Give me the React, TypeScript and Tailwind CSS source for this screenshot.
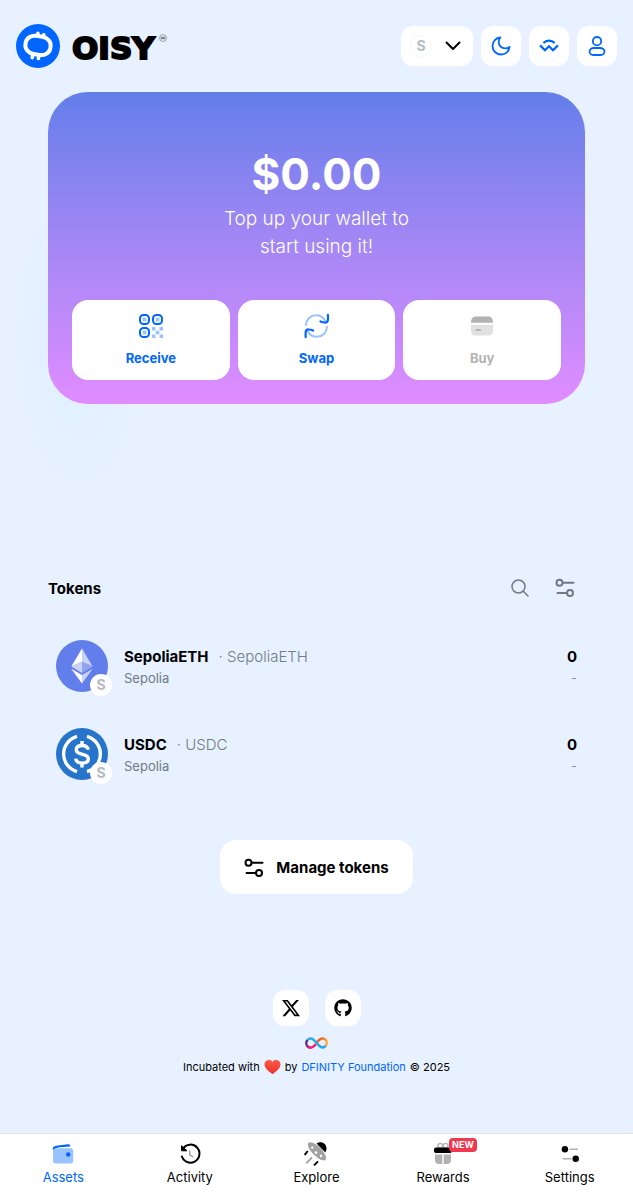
import type { ReactNode } from "react";
import { FaGithub, FaXTwitter } from "react-icons/fa6";

function OisyMark() {
  return (
    <svg width="44" height="44" viewBox="0 0 44 44" aria-hidden="true">
      <circle cx="22" cy="22" r="22" fill="#0066ff" />
      <g fill="none" stroke="#fff" strokeLinecap="round">
        <rect x="9.400" y="12.200" width="25.200" height="18.400" rx="9.500" ry="8.500" transform="rotate(9 22 21.400)" strokeWidth="4" />
        <path d="M21.500 12l.4-2.600M27.300 13l.5-2.200M16.700 31.500l-.5 2.100M22.700 32.500l-.3 2" strokeWidth="3.600" />
      </g>
    </svg>
  );
}

function RegisteredInfinity() {
  return (
    <svg width="8" height="8" viewBox="0 0 8 8" fill="none" stroke="#333" aria-hidden="true">
      <circle cx="4" cy="4" r="3.500" strokeWidth=".4" />
      <circle cx="2.900" cy="4" r="1" strokeWidth=".6" />
      <circle cx="5.100" cy="4" r="1" strokeWidth=".6" />
    </svg>
  );
}

function ChevronIcon() {
  return (
    <svg width="16" height="10" viewBox="0 0 16 10" fill="none" aria-hidden="true">
      <path d="M1.500 1.500L8 8l6.500-6.500" stroke="#000" strokeWidth="2" strokeLinecap="round" strokeLinejoin="round" />
    </svg>
  );
}

function MoonIcon() {
  return (
    <svg width="20" height="20" viewBox="0 0 20 20" fill="none" aria-hidden="true">
      <path
        d="M9.300 1.500C5 1.700 1.500 5.300 1.500 10a8.500 8.500 0 0 0 8.500 8.500c4.700 0 8.200-3.300 8.500-7.600-1.300.9-2.800 1.400-4.300 1.400-3.800 0-6.500-2.700-6.500-6.300 0-1.700.5-3.200 1.600-4.500Z"
        stroke="#0066ff"
        strokeWidth="1.800"
        strokeLinejoin="round"
      />
    </svg>
  );
}

function WalletConnectIcon() {
  return (
    <svg width="20" height="14" viewBox="0 0 20 14" fill="none" stroke="#0066ff" strokeWidth="2.200" aria-hidden="true">
      <path d="M4.400 4.100c3.100-3.300 8.100-3.300 11.200 0" />
      <path d="M1 6.400l5 4.900 4-4 4 4 5-4.900" />
    </svg>
  );
}

function PersonIcon() {
  return (
    <svg width="18" height="20" viewBox="0 0 18 20" fill="none" stroke="#0066ff" strokeWidth="1.800" aria-hidden="true">
      <circle cx="9" cy="5.200" r="4.200" />
      <rect x="1.500" y="12" width="15" height="7" rx="4.500" ry="3.500" />
    </svg>
  );
}

function QrIcon() {
  return (
    <svg width="24" height="24" viewBox="0 0 24 24" fill="none" aria-hidden="true">
      <g stroke="#0066ff" strokeWidth="2">
        <rect x="1" y="1" width="9" height="9" rx="3.500" />
        <rect x="14" y="1" width="9" height="9" rx="3.500" />
        <rect x="1" y="14" width="9" height="9" rx="3.500" />
      </g>
      <g fill="#99c2ff">
        <rect x="3.600" y="3.600" width="3.800" height="3.800" />
        <rect x="16.600" y="3.600" width="3.800" height="3.800" />
        <rect x="3.600" y="16.600" width="3.800" height="3.800" />
        <path d="M13 13h3.500v3.500H13zM20.500 13H24v3.500h-3.500zM16.700 16.700h3.600v3.600h-3.600zM13 20.500h3.500V24H13zM20.500 20.500H24V24h-3.500z" />
      </g>
    </svg>
  );
}

function SwapIcon() {
  return (
    <svg width="26" height="26" viewBox="0 0 26 26" fill="none" strokeWidth="2" strokeLinecap="round" strokeLinejoin="round" aria-hidden="true">
      <path d="M2 12C2.300 6.300 6.600 2.200 12 2.200c3.900 0 7.300 2 9 5.300M23 14c-.3 5.700-4.600 9.800-10 9.800-3.900 0-7.300-2-9-5.300" stroke="#99c2ff" />
      <path d="M23.900 1.800c.2 2 .2 3.800 0 5.200-.3 1.900-1.300 2.700-3.200 2.500-1.500-.1-2.900-.5-4.200-1M1.700 24.200c-.2-2-.2-3.800 0-5.200.3-1.900 1.300-2.700 3.200-2.500 1.500.1 2.900.5 4.200 1" stroke="#0066ff" strokeWidth="2.200" />
    </svg>
  );
}

function CardIcon() {
  return (
    <svg width="24" height="24" viewBox="0 0 24 24" aria-hidden="true">
      <path d="M1 8.800C1 5 2.400 2.500 6 2.500h12c3.600 0 5 2.500 5 6.300Z" fill="#b2b2b2" />
      <path d="M1 10.800h22V16c0 4-1.600 5.500-5 5.500H6c-3.400 0-5-1.500-5-5.500Z" fill="#e0e0e0" />
      <path d="M6.300 16h4" stroke="#a8a8a8" strokeWidth="1.700" strokeLinecap="round" />
    </svg>
  );
}

function SearchIcon() {
  return (
    <svg width="18" height="18" viewBox="0 0 18 18" fill="none" stroke="#707b85" strokeWidth="1.500" strokeLinecap="round" aria-hidden="true">
      <circle cx="7.500" cy="7.500" r="6.500" />
      <path d="M12.300 12.300L17 17" />
    </svg>
  );
}

function SlidersIcon() {
  return (
    <svg width="20" height="20" viewBox="0 0 20 20" fill="none" stroke="currentColor" strokeWidth="2" strokeLinecap="round" aria-hidden="true">
      <circle cx="4.500" cy="4.800" r="3" />
      <path d="M8 4.800h10.500M2.500 15h9" />
      <circle cx="15" cy="15" r="3" />
    </svg>
  );
}

function EthLogo() {
  return (
    <svg width="52" height="52" viewBox="0 0 52 52" aria-hidden="true">
      <circle cx="26" cy="26" r="26" fill="#627eea" />
      <path d="M26 8.500v13.200l10.700 4.900Z" fill="#c9d3f8" />
      <path d="M26 8.500L15.300 26.600 26 21.700Z" fill="#fff" />
      <path d="M26 21.700v11.200l10.700-6.300Z" fill="#92a5f0" />
      <path d="M15.300 26.600L26 32.900V21.700Z" fill="#c9d3f8" />
      <path d="M26 35v8.500l10.700-14.800Z" fill="#c9d3f8" />
      <path d="M15.300 28.700L26 43.500V35Z" fill="#fff" />
    </svg>
  );
}

function UsdcLogo() {
  return (
    <svg width="52" height="52" viewBox="0 0 52 52" fill="none" aria-hidden="true">
      <circle cx="26" cy="26" r="26" fill="#2775ca" />
      <g stroke="#fff" strokeWidth="3.400">
        <path d="M21 8.300a18.400 18.400 0 0 0 0 35.400M31 8.300a18.400 18.400 0 0 1 0 35.400" />
        <path d="M32.200 21.700c-.5-2.700-2.700-4.200-6-4.200-3.500 0-5.900 1.500-5.900 4.200 0 6.300 12 3 12 9 0 2.800-2.500 4.400-6.100 4.400-3.700 0-6.100-1.500-6.500-4.500" />
        <path d="M26 13v4.500M26 35v4.500" />
      </g>
    </svg>
  );
}

function InfinityLogo() {
  return (
    <svg width="23" height="12" viewBox="0 0 46 24" fill="none" strokeWidth="5" role="img" aria-label="Internet Computer">
      <defs>
        <linearGradient id="inf-left" x1="2" y1="6" x2="20" y2="20" gradientUnits="userSpaceOnUse">
          <stop offset=".2" stopColor="#522785" />
          <stop offset=".7" stopColor="#ed1e79" />
        </linearGradient>
        <linearGradient id="inf-right" x1="24" y1="4" x2="44" y2="18" gradientUnits="userSpaceOnUse">
          <stop offset=".2" stopColor="#f15a24" />
          <stop offset=".8" stopColor="#fbb03b" />
        </linearGradient>
      </defs>
      <path d="M5 6C1.500 10 2.300 16 5.500 19c4 3.500 9 2.500 13-1.200L22 14" stroke="url(#inf-left)" />
      <path d="M24 10.500C28 6 31 3 35 3c5 0 8.500 4.200 8.500 9 0 2.500-.8 4.500-2.500 6.300" stroke="url(#inf-right)" />
      <path d="M5 6C8.500 2.200 13 2.300 17 5.300c5 3.800 7.500 9 12.500 13 4 3.200 8.500 3 11.800-.3" stroke="#29abe2" />
    </svg>
  );
}

function HeartIcon() {
  return (
    <svg width="17" height="16" viewBox="0 0 17 16" role="img" aria-label="love">
      <defs>
        <linearGradient id="heart" x1="0" y1="0" x2="0" y2="1">
          <stop offset="0" stopColor="#ff5a47" />
          <stop offset="1" stopColor="#e9312b" />
        </linearGradient>
      </defs>
      <path
        d="M8.500 3.200C9.400 1.500 11 .7 12.600.9c2.500.2 4 2.200 3.900 4.700-.2 4-4.200 7-8 9.600-3.800-2.600-7.800-5.600-8-9.600C.4 3.100 1.900 1.100 4.400.9 6 .7 7.600 1.500 8.500 3.200Z"
        fill="url(#heart)"
      />
    </svg>
  );
}

function WalletNavIcon() {
  return (
    <svg width="24" height="24" viewBox="0 0 24 24" aria-hidden="true">
      <path d="M2 8.500c1.500-1.600 3-2.300 5-2.300h12c2.200 0 3.200 1 3.200 3v9.300c0 2-1 3-3 3H5c-2 0-3-1-3-3Z" fill="#99c2ff" />
      <path d="M2 8.300c-.6-2.600.2-4.100 3.200-4.500l11.700-1.600c1.500-.2 2.300.4 2.300 2.300-4.700.3-9.700.4-13 1.300-1.900.5-3.300 1.300-4.200 2.500Z" fill="#0066ff" />
      <circle cx="17.200" cy="12.500" r="2.200" fill="#0066ff" />
    </svg>
  );
}

function ActivityNavIcon() {
  return (
    <svg width="24" height="24" viewBox="0 0 24 24" fill="none" strokeWidth="2" aria-hidden="true">
      <path d="M4.900 6.700A9 9 0 1 1 3.700 13.800" stroke="#000" />
      <path d="M3.500 3.800v5H9Z" fill="#000" stroke="#000" strokeLinejoin="round" strokeWidth="1" />
      <path d="M11.800 8.500V13l3.500 2" stroke="#999" strokeWidth="1.400" />
    </svg>
  );
}

function ExploreNavIcon() {
  return (
    <svg width="24" height="24" viewBox="0 0 24 24" aria-hidden="true">
      <path d="M12.500 1.600C15-.3 18.500 0 20.700 2.200s2.400 5.600.4 8.100Z" fill="#000" />
      <ellipse cx="13" cy="9.300" rx="4.700" ry="12" transform="rotate(-45 13 9.300)" fill="#a3a3a3" />
      <path d="M14 1.700c2-1.500 4.900-1.200 6.700.5 1.900 1.900 2 5 .3 7.100Z" fill="#000" />
      <g fill="#fff">
        <circle cx="8.300" cy="5.600" r="1.200" />
        <circle cx="12" cy="10.600" r="1.300" />
        <circle cx="17" cy="14" r="1.200" />
      </g>
      <g strokeWidth="1.900">
        <path d="M3.700 9L.7 13M14 19.300L10 23.300" stroke="#000" />
        <path d="M8 15.300l-5.700 6" stroke="#a3a3a3" />
      </g>
    </svg>
  );
}

function RewardsNavIcon() {
  return (
    <svg width="24" height="24" viewBox="0 0 24 24" aria-hidden="true">
      <g fill="none" stroke="#b2b2b2" strokeWidth="1.400">
        <circle cx="9.200" cy="3.800" r="2.400" />
        <circle cx="14.600" cy="3.800" r="2.400" />
      </g>
      <path d="M4 12.500h7.300V22H8c-2.700 0-4-1.200-4-4ZM12.700 12.500H20V18c0 2.800-1.300 4-4 4h-3.300Z" fill="#b2b2b2" />
      <rect x="3" y="5.500" width="18" height="5.500" rx="2" fill="#000" />
    </svg>
  );
}

function SettingsNavIcon() {
  return (
    <svg width="24" height="24" viewBox="0 0 24 24" aria-hidden="true">
      <path d="M11.500 7.300H20M4.500 16.800h9" stroke="#b2b2b2" strokeWidth="1.500" />
      <circle cx="6.900" cy="7.300" r="3.200" />
      <circle cx="17.700" cy="16.800" r="3.200" />
    </svg>
  );
}

function HeaderButton({ label, children }: { label: string; children: ReactNode }) {
  return (
    <button aria-label={label} className="flex size-10 items-center justify-center rounded-xl bg-white">
      {children}
    </button>
  );
}

function HeroAction({ label, icon, disabled }: { label: string; icon: ReactNode; disabled?: boolean }) {
  return (
    <button
      disabled={disabled}
      className="flex h-20 flex-1 flex-col items-center justify-between rounded-2xl bg-white pt-3 pb-3 text-[13px] leading-5 font-bold text-[#0066ff] disabled:text-[#b2b2b2]"
    >
      <span className="flex h-7 items-center">{icon}</span>
      {label}
    </button>
  );
}

function TokenRow({ symbol, network, logo }: { symbol: string; network: string; logo: ReactNode }) {
  return (
    <li className="flex items-center gap-4 px-2">
      <div className="relative size-[52px] shrink-0">
        {logo}
        <span className="absolute -right-1 -bottom-1 flex size-[22px] items-center justify-center rounded-full bg-white text-sm font-bold text-[#b4bcc4]">
          S
        </span>
      </div>
      <div className="flex-1 pt-0.5">
        <p className="text-[15px] leading-[22px]">
          <strong className="font-bold">{symbol}</strong>
          <span className="ml-2.5 font-[350] text-[#707b85]">· {symbol}</span>
        </p>
        <p className="text-[13px] leading-5 text-[#707b85]">{network}</p>
      </div>
      <div className="pt-0.5 text-right">
        <p className="text-[15px] leading-[22px] font-bold">0</p>
        <p className="text-[13px] leading-5 text-[#8d969e]">-</p>
      </div>
    </li>
  );
}

function NavItem({ label, icon, active, badge }: { label: string; icon: ReactNode; active?: boolean; badge?: string }) {
  return (
    <a
      href="#"
      aria-current={active ? "page" : undefined}
      className="flex flex-1 flex-col items-center pt-2 text-[13px] leading-[22px] aria-[current=page]:text-[#0066ff]"
    >
      <span className="relative">
        {icon}
        {badge && (
          <span className="absolute -top-1 left-[18px] rounded bg-[#f0384f] px-[3px] text-[9px] leading-[14px] font-bold text-white">
            {badge}
          </span>
        )}
      </span>
      {label}
    </a>
  );
}

export default function App() {
  return (
    <div className="flex min-h-screen flex-col bg-[#e7f1ff] bg-[radial-gradient(70px_150px_at_80px_340px,#dfefff,transparent)] font-['Inter',sans-serif] text-black">
      <header className="flex items-center justify-between px-4 py-6">
        <a href="#" aria-label="OISY home" className="flex items-center gap-3">
          <OisyMark />
          <span className="flex items-start gap-1 pt-1">
            <span className="font-['DejaVu_Sans',sans-serif] text-[31px] leading-9 font-bold [-webkit-text-stroke:2px_black]">
              OISY
            </span>
            <span className="pt-1">
              <RegisteredInfinity />
            </span>
          </span>
        </a>
        <div className="flex items-center gap-2">
          <button aria-label="Network" className="flex h-10 items-center gap-3.5 rounded-xl bg-white pr-3 pl-2.5">
            <span className="flex size-5 items-center justify-center rounded-full text-sm font-bold text-[#b4bcc4] ring-1 ring-[#f7f8fa]">
              S
            </span>
            <ChevronIcon />
          </button>
          <HeaderButton label="Dark mode">
            <MoonIcon />
          </HeaderButton>
          <HeaderButton label="WalletConnect">
            <WalletConnectIcon />
          </HeaderButton>
          <HeaderButton label="Account">
            <PersonIcon />
          </HeaderButton>
        </div>
      </header>

      <main className="flex flex-col px-12">
        <section className="rounded-[40px] bg-linear-to-b from-[#627eea] to-[#e08cff] px-6 pt-14 pb-6 text-center text-white">
          <p className="text-[44px] leading-[52px] font-bold">$0.00</p>
          <p className="mx-auto mt-[5px] w-52 text-[19px] leading-7 font-light">Top up your wallet to start using it!</p>
          <div className="mt-[39px] flex gap-2">
            <HeroAction label="Receive" icon={<QrIcon />} />
            <HeroAction label="Swap" icon={<SwapIcon />} />
            <HeroAction label="Buy" icon={<CardIcon />} disabled />
          </div>
        </section>

        <section className="mt-[172px] flex flex-col">
          <div className="flex h-6 items-center justify-between">
            <h2 className="pt-0.5 text-[15px] leading-6 font-bold">Tokens</h2>
            <div className="flex items-center gap-[26px] pr-2.5 text-[#707b85]">
              <button aria-label="Search">
                <SearchIcon />
              </button>
              <button aria-label="Filter">
                <SlidersIcon />
              </button>
            </div>
          </div>
          <ul className="mt-10 flex flex-col gap-9">
            <TokenRow symbol="SepoliaETH" network="Sepolia" logo={<EthLogo />} />
            <TokenRow symbol="USDC" network="Sepolia" logo={<UsdcLogo />} />
          </ul>
          <button className="mt-[60px] flex items-center gap-3 self-center rounded-2xl bg-white px-6 pt-4 pb-3.5 text-[15px] leading-6 font-bold">
            <SlidersIcon />
            Manage tokens
          </button>
        </section>
      </main>

      <footer className="mt-24 flex flex-col items-center pb-14">
        <div className="flex gap-4">
          <a href="#" aria-label="X" className="flex size-9 items-center justify-center rounded-xl bg-white">
            <FaXTwitter size={20} />
          </a>
          <a href="#" aria-label="GitHub" className="flex size-9 items-center justify-center rounded-xl bg-white">
            <FaGithub size={18} />
          </a>
        </div>
        <div className="mt-[11px]">
          <InfinityLogo />
        </div>
        <p className="mt-2 flex items-center gap-1 text-[11px] leading-5">
          Incubated with <HeartIcon /> by
          <a href="#" className="text-[#0066ff]">
            DFINITY Foundation
          </a>
          © 2025
        </p>
      </footer>

      <nav className="sticky bottom-0 mt-auto flex h-[61px] border-t border-[#dfe7f2] bg-white">
        <NavItem label="Assets" icon={<WalletNavIcon />} active />
        <NavItem label="Activity" icon={<ActivityNavIcon />} />
        <NavItem label="Explore" icon={<ExploreNavIcon />} />
        <NavItem label="Rewards" icon={<RewardsNavIcon />} badge="NEW" />
        <NavItem label="Settings" icon={<SettingsNavIcon />} />
      </nav>
    </div>
  );
}
